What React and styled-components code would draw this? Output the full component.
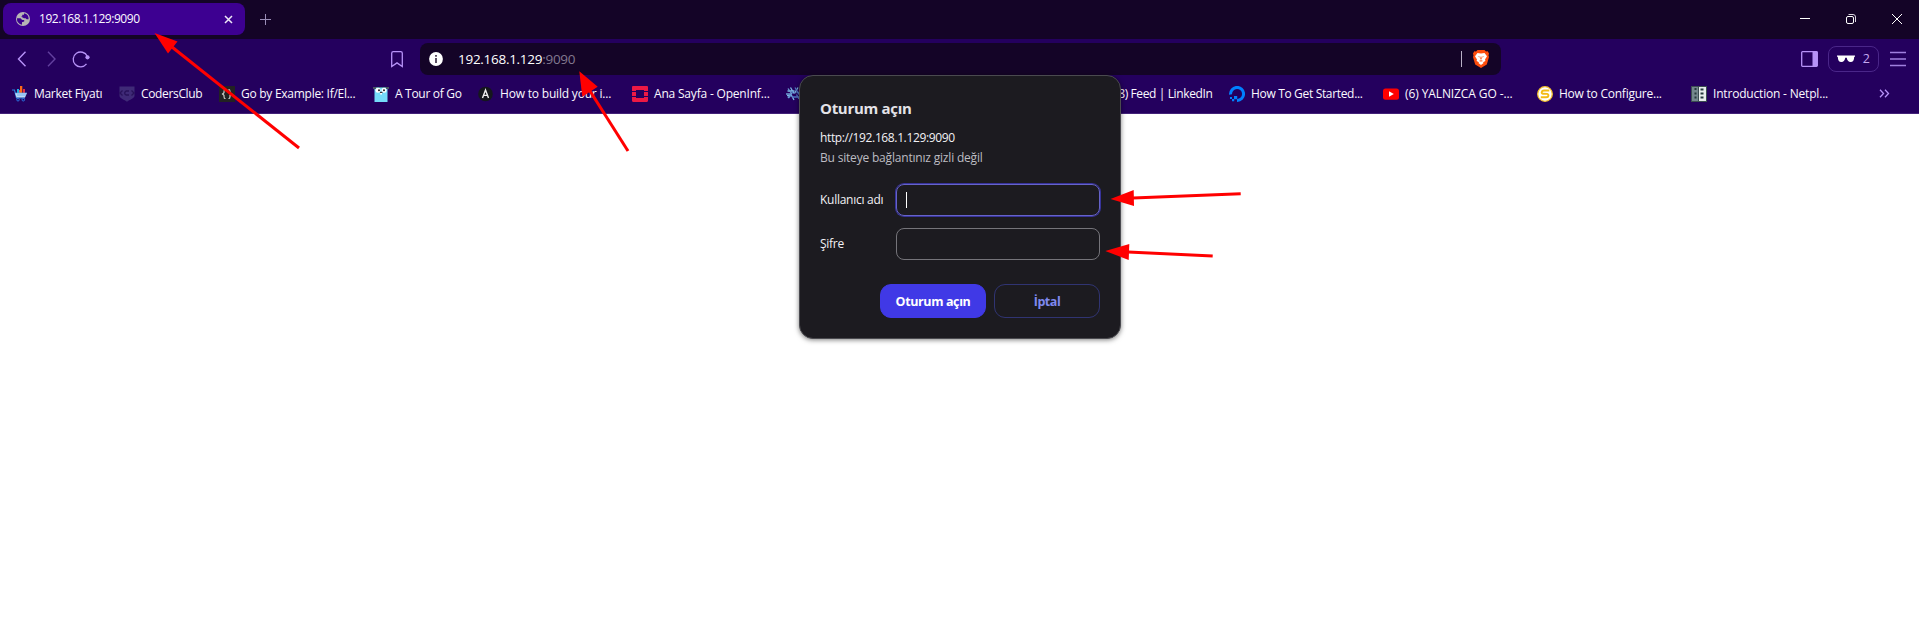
import React from 'react';
import styled, { createGlobalStyle } from 'styled-components';

const Global = createGlobalStyle`
  * { box-sizing: border-box; }
  html, body { margin: 0; background: #fff; overflow: hidden; }
  body { font-family: "Open Sans", "Noto Sans", sans-serif; font-size: 12px; color: #fbf9ff; }
  svg { display: block; flex: none; }
`;

const Browser = styled.div`
  position: relative;
  width: 1919px;
  height: 634px;
  display: flex;
  flex-direction: column;
  overflow: hidden;
`;
const TabStrip = styled.header`
  height: 39px;
  background: #140427;
  display: flex;
  align-items: flex-start;
  padding: 3px 0 0 3px;
`;
const Tab = styled.div`
  width: 242px;
  height: 32px;
  border-radius: 8px;
  background: #3d0091;
  display: flex;
  align-items: center;
  padding: 0 12px 0 12px;
`;
const Label = styled.span`
  white-space: pre;
  line-height: 16px;
  font-size: ${p => p.$size || 12}px;
  font-weight: ${p => p.$weight || 400};
  letter-spacing: ${p => p.$track || 0}px;
  color: ${p => p.$color || 'inherit'};
`;
const TabTitle = styled(Label)`
  flex: 1;
  margin-left: 8px;
`;
const NewTab = styled.div`
  padding: 11px 0 0 15px;
`;
const WindowControls = styled.div`
  margin-left: auto;
  display: flex;
  gap: 34px;
  padding: 10px 16px 0 0;
`;
const Toolbar = styled.div`
  height: 41px;
  background: #24005e;
  display: flex;
  align-items: center;
  padding: 0 12px 1px 16px;
`;
const NavButtons = styled.div`
  display: flex;
  align-items: center;
  width: 374px;
  gap: 19px;
`;
const Reload = styled.div`
  margin-left: -4px;
`;
const AddressBar = styled.div`
  width: 1081px;
  height: 32px;
  margin-left: 16px;
  border-radius: 8px;
  background: #140427;
  display: flex;
  align-items: center;
  padding: 0 12px 0 9px;
`;
const Url = styled(Label)`
  margin-left: 15px;
  flex: 1;
`;
const Divider = styled.span`
  width: 1px;
  height: 16px;
  background: #b9b0c6;
  margin-right: 11px;
`;
const ToolbarActions = styled.div`
  margin-left: auto;
  display: flex;
  align-items: center;
`;
const PrivatePill = styled.div`
  width: 51px;
  height: 26px;
  margin: 0 10px;
  border: 1px solid #4a2689;
  border-radius: 8px;
  display: flex;
  align-items: center;
  justify-content: space-between;
  padding: 0 8px;
`;
const Bookmarks = styled.nav`
  height: 34px;
  background: #24005e;
  border-bottom: 1px solid #432279;
  display: flex;
  align-items: center;
  padding: 0 0 6px 12px;
`;
const Bookmark = styled.div`
  width: ${p => p.$w}px;
  flex: none;
  display: flex;
  align-items: center;
  gap: 6px;
`;
const Dialog = styled.section`
  position: absolute;
  left: 799px;
  top: 75px;
  width: 322px;
  height: 264px;
  border: 1px solid #4a4a4f;
  border-radius: 14px;
  background: #1c1b20;
  box-shadow: 0 1px 5px rgba(0, 0, 0, 0.5);
  padding: 21px 20px 20px;
  display: flex;
  flex-direction: column;
`;
const Heading = styled(Label)`
  line-height: 22px;
  margin-bottom: 9px;
`;
const Origin = styled(Label)`
  line-height: 20px;
`;
const Form = styled.div`
  margin-top: 16px;
  display: flex;
  flex-direction: column;
  gap: 12px;
`;
const Field = styled.div`
  display: flex;
  align-items: center;
  justify-content: space-between;
`;
const Input = styled.div`
  width: 204px;
  height: 32px;
  border-radius: 8px;
  border: 1px solid ${p => (p.$focus ? '#6663c8' : '#75747a')};
  box-shadow: ${p => (p.$focus ? '0 0 0 1px #37339a' : 'none')};
  display: flex;
  align-items: center;
  padding-left: 9px;
`;
const Caret = styled.span`
  width: 1px;
  height: 16px;
  background: #fff;
`;
const Buttons = styled.div`
  margin-top: 24px;
  display: flex;
  justify-content: flex-end;
  gap: 8px;
`;
const Button = styled.div`
  width: 106px;
  height: 34px;
  border-radius: 11px;
  display: flex;
  align-items: center;
  justify-content: center;
  padding-top: 1px;
  background: ${p => (p.$primary ? '#4039e6' : 'transparent')};
  border: 1px solid ${p => (p.$primary ? '#4039e6' : '#303472')};
`;
const Arrows = styled.svg`
  position: absolute;
  left: 0;
  top: 0;
`;

const Icon = ({ w = 16, h = w, box = `0 0 ${w} ${h}`, children }) => (
  <svg width={w} height={h} viewBox={box} fill="none">{children}</svg>
);

const Globe = () => (
  <Icon>
    <circle cx="8" cy="8" r="7" fill="#b7b5b5" />
    <path d="M2 7.2h3.2c1.2 0 1.3 1.8 2.5 1.8h1.5v1.5l-2.2.8v2.4a5.8 5.8 0 0 1-5-6.5zM9 2.2v1.6H7.2v1.7H5.8L9 7.2h1.6l1 1h2A5.7 5.7 0 0 0 9 2.2z" fill="#3d0091" />
  </Icon>
);
const Cart = () => (
  <Icon>
    <path d="M5 3h2v4H5z" fill="#18b3e6" /><path d="M8 0h2.3v7H8z" fill="#ff6a13" />
    <path d="M11 3h2v4h-2z" fill="#e42e42" /><path d="M7 4h1v4H7z" fill="#ee4e5e" />
    <path d="M0 4h2.5l2 8h8.5" stroke="#2d7fdc" strokeWidth="1.1" />
    <path d="M3 7h12l-2 4.5H4.5z" fill="#b8dcfa" />
    <path d="M3 7h12M5 9h9" stroke="#5d9ce8" strokeWidth=".7" />
    <circle cx="6" cy="13.7" r="1.3" stroke="#2871de" /><circle cx="11.3" cy="13.7" r="1.3" stroke="#2871de" />
  </Icon>
);
const Shield = () => (
  <Icon>
    <path d="M.5.500h15v9.500c0 2-5 4-7.500 5.700C5.500 14 .5 12 .5 10z" fill="#3f2a77" />
    <path d="M3.500 4.500 1 7l2.500 2.500M12.500 4.500 15 7l-2.500 2.500M10 5H7.200L5.800 6.300v1.600L7.200 9H10" stroke="#281259" strokeWidth="1.300" />
  </Icon>
);
const Braces = () => (
  <Icon>
    <path d="M0 0h16v16H0z" fill="#222" />
    <path d="M6.500 3.500H6c-1 0-1 1-1 2v1.300L3.500 8 5 9.200v1.300c0 1 0 2 1 2h.5M9.500 3.500h.5c1 0 1 1 1 2v1.300L12.500 8 11 9.200v1.300c0 1 0 2-1 2h-.5" stroke="#d8d8d2" strokeWidth="1.100" />
  </Icon>
);
const Gopher = () => (
  <Icon>
    <path d="M1.500 1h13v15h-13z" fill="#75dcfa" /><path d="M0 1h3v2H0zM13 1h3v2h-3z" fill="#4b5563" />
    <path d="M3 1h10v.8H3z" fill="#476f80" />
    <circle cx="5" cy="4.200" r="2.500" fill="#fff" /><circle cx="11" cy="4.200" r="2.500" fill="#fff" />
    <circle cx="6" cy="4.200" r="1" fill="#222" /><circle cx="11" cy="4.200" r="1" fill="#222" />
    <path d="M7 5.800h2.500v1.300H7z" fill="#40343c" /><path d="M7.200 7.100h1.800v1.300H7.200z" fill="#fff" />
  </Icon>
);
const LetterA = () => (
  <Icon>
    <circle cx="7.500" cy="8" r="7.300" fill="#15171c" />
    <path d="m4.500 12 3-8 3 8M5.700 9.400h3.700" stroke="#eee" strokeWidth="1.400" />
  </Icon>
);
const OpenStack = () => (
  <Icon>
    <path d="M0 5V1.200C0 .5.5 0 1.200 0h13.600C15.500 0 16 .5 16 1.200V5h-4V4H4v1zM0 11v3.800C0 15.500.5 16 1.200 16h13.600c.7 0 1.200-.5 1.200-1.200V11h-4v1H4v-1zM0 6h4v4H0zM12 6h4v4h-4z" fill="#ed1944" />
  </Icon>
);
const Snowflake = () => (
  <Icon>
    <g strokeWidth="1.300">
      <path d="M4.500 1.500 8 7.500M1.500 5h7M1 9.500h4.500L8 14M12 1.500 8.500 7.500" stroke="#7ebae4" />
      <path d="M9 1.500l4 7M15 6.500h-4.500M3 12l4-6.500M6 11h8.500M13 13l-2.500-4.500" stroke="#5277c3" />
      <path d="m2 2.500 3.500 5L2 12M0 8h4.500" stroke="#6d9fd4" />
    </g>
  </Icon>
);
const LinkedIn = () => (
  <Icon><rect width="16" height="16" rx="2" fill="#0a66c2" /><path d="M4 6v7M4 3v1.500M7.500 13V6M7.500 9c0-3 4.500-3 4.500 0v4" stroke="#fff" strokeWidth="1.800" /></Icon>
);
const Ocean = () => (
  <Icon>
    <path d="M1.600 8.500A6.500 6.500 0 1 1 8 14.400" stroke="#0080ff" strokeWidth="3" />
    <path d="M5 10h3.200v3.200H5zM3 13h2.200v2.200H3zM1 11h2v2H1z" fill="#0080ff" />
  </Icon>
);
const Tube = () => (
  <Icon><rect y="2.500" width="16" height="11.200" rx="2.500" fill="#f00" /><path d="M6 5.300 10.800 8 6 10.700z" fill="#fff" /></Icon>
);
const CoinS = () => (
  <Icon>
    <circle cx="8" cy="8" r="7.300" fill="#fff" stroke="#f5c22e" strokeWidth="1.300" />
    <path d="M12.300 4.500H7C4.200 4.500 4 7.600 6 7.700l4 .2c2 .1 2 3.400-.8 3.400H3.800" stroke="#f3bb15" strokeWidth="1.900" />
  </Icon>
);
const Netplan = () => (
  <Icon>
    <path d="M0 0h16v16H0z" fill="#3c4d52" /><path d="M1 1h6v14H1z" fill="#74878d" /><path d="M8 1h7v14H8z" fill="#e7ecec" />
    <path d="M3.500 3h2M3.500 7.500h2M3.500 11.500h2M9.500 3.500h3M9.500 7.500h3M9.500 11.500h3" stroke="#26383e" strokeWidth="1.800" />
  </Icon>
);
const Brave = () => (
  <Icon w={16} h={18}>
    <path d="M4.500 0h7L13 1.400l1.700-.2L16 3.500l-.5 2L16 7l-2.200 7.500L8 18l-5.800-3.500L0 7l.5-1.500-.5-2 1.300-2.300 1.700.2z" fill="#ff4d0d" />
    <path d="m4.500 3 3.500.6 3.500-.6 2.500 3.300-2 3.200.4 1.400-2.400 1.300 .6.800L8 15l-2.600-2 .6-.8-2.400-1.300.4-1.400L2 6.300z" fill="#fff" />
    <path d="m4.700 6.200 2.300.5-.6.900zM11.300 6.200 9 6.700l.6.900zM7.600 6.500h.8l.3 2.500-.7.800-.7-.8zM5.800 10.900l2.200-.7 2.200.7-2.200.6z" fill="#ff4d0d" />
  </Icon>
);

const bookmarks = [
  { icon: Cart, text: 'Market Fiyatı', w: 107, track: -0.3 },
  { icon: Shield, text: 'CodersClub', w: 100, track: -0.35 },
  { icon: Braces, text: 'Go by Example: If/El...', w: 154, track: -0.27 },
  { icon: Gopher, text: 'A Tour of Go', w: 105, track: -0.3 },
  { icon: LetterA, text: 'How to build your i...', w: 154, track: -0.19 },
  { icon: OpenStack, text: 'Ana Sayfa - OpenInf...', w: 154, track: -0.19 },
  { icon: Snowflake, text: '', w: 307, track: 0 },
  { icon: LinkedIn, text: '(8) Feed | LinkedIn', w: 136, track: -0.38 },
  { icon: Ocean, text: 'How To Get Started...', w: 154, track: -0.33 },
  { icon: Tube, text: '(6) YALNIZCA GO -...', w: 154, track: -0.1 },
  { icon: CoinS, text: 'How to Configure...', w: 154, track: -0.24 },
  { icon: Netplan, text: 'Introduction - Netpl...', w: 188, track: -0.19 },
];

const arrows = [
  { line: 'M172 47 299 148', head: '154.500,33 177.500,41.500 168,53.500' },
  { line: 'M590 91 628 151', head: '579.300,71.300 597.700,86.700 582.300,96.700' },
  { line: 'M1133 198 1240.700 193.700', head: '1110.500,199 1133.700,190 1134,206' },
  { line: 'M1128 252 1212.700 256', head: '1105.300,251 1129.300,244 1128.700,260' },
];

export default function App() {
  return (
    <Browser>
      <Global />
      <TabStrip>
        <Tab>
          <Globe />
          <TabTitle $track={-0.45}>192.168.1.129:9090</TabTitle>
          <Icon w={9}><path d="m1 1 7 7m0-7L1 8" stroke="#eee8f7" strokeWidth="1.500" /></Icon>
        </Tab>
        <NewTab><Icon w={11}><path d="M5.500 0v11M0 5.500h11" stroke="#9a8db7" /></Icon></NewTab>
        <WindowControls>
          <Icon w={12}><path d="M1 5.500h10" stroke="#fff" /></Icon>
          <Icon w={12}><rect x="1.500" y="3.500" width="7" height="7" rx="1.500" stroke="#fff" /><path d="M3.500 1.500H8a2.500 2.500 0 0 1 2.500 2.500v5" stroke="#ddd7e4" /></Icon>
          <Icon w={12}><path d="m1 1 10 10m0-10L1 11" stroke="#fff" /></Icon>
        </WindowControls>
      </TabStrip>
      <Toolbar>
        <NavButtons>
          <Icon w={11} h={16}><path d="M9.500.8 2.500 8l7 7.200" stroke="#b792f8" strokeWidth="1.400" /></Icon>
          <Icon w={11} h={16}><path d="m2 .8 7 7.200-7 7.200" stroke="#63409f" strokeWidth="1.400" /></Icon>
          <Reload>
            <Icon w={18}>
              <path d="M15.300 6.200A7.400 7.400 0 1 0 14.500 13.900" stroke="#b792f8" strokeWidth="1.300" />
              <circle cx="15.500" cy="7.300" r="2.100" fill="#b792f8" />
            </Icon>
          </Reload>
        </NavButtons>
        <Icon w={14} h={18}><path d="M1.700 16.500V3.200c0-1 .6-1.600 1.600-1.600h7.400c1 0 1.600.6 1.600 1.600v13.300L7 12.900z" stroke="#b792f8" strokeWidth="1.300" /></Icon>
        <AddressBar>
          <Icon w={14}><circle cx="7" cy="7" r="6.900" fill="#fff" /><path d="M7 3v1.800M7 6v5" stroke="#34253f" strokeWidth="1.600" /></Icon>
          <Url $size={13.5} $track={-0.28} $color="#fff">192.168.1.129<Label as="span" $size={13.5} $track={-0.28} $color="#82788f">:9090</Label></Url>
          <Divider />
          <Brave />
        </AddressBar>
        <ToolbarActions>
          <Icon w={17} h={16}><rect x=".7" y=".7" width="15.600" height="14.600" rx=".8" stroke="#b792f8" strokeWidth="1.300" /><path d="M11.500 1h5v14h-5z" fill="#b792f8" /></Icon>
          <PrivatePill>
            <Icon w={18} h={8}><path d="M0 .5h18v1.200h-.8c0 3.500-1.200 5.300-3.500 5.300-2.500 0-3.500-2-4-4.300H8.300c-.5 2.300-1.500 4.300-4 4.300C2 7 .8 5.200.8 1.700H0z" fill="#fff" /></Icon>
            <Label $size={12.5} $color="#c4a8f0">2</Label>
          </PrivatePill>
          <Icon w={18} h={16}><path d="M1 1.500h16M1 8h16M1 14.500h16" stroke="#a080df" strokeWidth="1.500" /></Icon>
        </ToolbarActions>
      </Toolbar>
      <Bookmarks>
        {bookmarks.map(({ icon: Mark, text, w, track }) => (
          <Bookmark key={text} $w={w}>
            <Mark />
            <Label $track={track}>{text}</Label>
          </Bookmark>
        ))}
        <Icon w={11} h={9}><path d="m1 .8 3.500 3.700L1 8.200M6 .8l3.500 3.700L6 8.200" stroke="#b792f8" strokeWidth="1.300" /></Icon>
      </Bookmarks>
      <Dialog>
        <Heading $size={15} $weight={700} $track={-0.3} $color="#e4e3e8">Oturum açın</Heading>
        <Origin $track={-0.37} $color="#f2f1f5">http://192.168.1.129:9090</Origin>
        <Origin $track={-0.19} $color="#bdbcc2">Bu siteye bağlantınız gizli değil</Origin>
        <Form>
          <Field><Label $track={-0.27} $color="#f2f1f5">Kullanıcı adı</Label><Input $focus><Caret /></Input></Field>
          <Field><Label $track={-0.27} $color="#f2f1f5">Şifre</Label><Input /></Field>
        </Form>
        <Buttons>
          <Button $primary><Label $weight={700} $size={12.5} $track={-0.38} $color="#fff">Oturum açın</Label></Button>
          <Button><Label $weight={700} $size={12.5} $track={-0.45} $color="#7f89ee">İptal</Label></Button>
        </Buttons>
      </Dialog>
      <Arrows width="1919" height="634" viewBox="0 0 1919 634">
        {arrows.map(a => (
          <g key={a.line}>
            <path d={a.line} stroke="#f00" strokeWidth="3" />
            <polygon points={a.head} fill="#f00" />
          </g>
        ))}
      </Arrows>
    </Browser>
  );
}
